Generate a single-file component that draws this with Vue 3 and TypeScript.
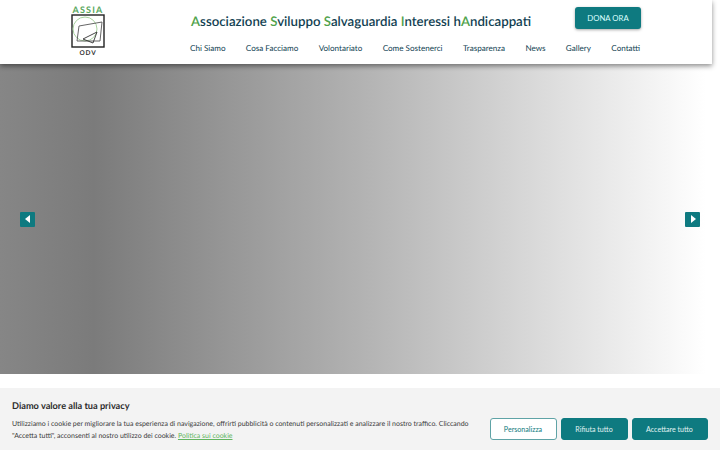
<script setup lang="ts">
const navItems = ['Chi Siamo', 'Cosa Facciamo', 'Volontariato', 'Come Sostenerci', 'Trasparenza', 'News', 'Gallery', 'Contatti']
</script>

<template>
  <div class="page">
    <header class="header">
      <div class="logo">
        <span class="logo-top">ASSIA</span>
        <svg class="logo-mark" width="34" height="34" viewBox="0 0 34 34">
          <rect x="1" y="1" width="32" height="32" fill="#fff" stroke="#222" stroke-width="1.4" />
          <circle cx="14" cy="15" r="12" fill="none" stroke="#a9d3a0" stroke-width="1" />
          <path d="M8 12 L31 8 L29 27 L6 27 Z" fill="none" stroke="#555" stroke-width="0.9" />
          <path d="M12 25 L26 18 L22 29 L17 27 Z" fill="none" stroke="#333" stroke-width="0.9" />
        </svg>
        <span class="logo-bottom">ODV</span>
      </div>
      <div class="main">
        <div class="top-row">
          <h1 class="title"><b>A</b>ssociazione <b>S</b>viluppo <b>S</b>alvaguardia <b>I</b>nteressi h<b>A</b>ndicappati</h1>
          <button class="donate">DONA ORA</button>
        </div>
        <nav class="nav">
          <a v-for="item in navItems" :key="item">{{ item }}</a>
        </nav>
      </div>
    </header>

    <section class="hero">
      <button class="arrow">
        <svg width="6" height="8" viewBox="0 0 6 8"><path d="M5 0 L5 8 L0 4 Z" fill="#fff" /></svg>
      </button>
      <button class="arrow">
        <svg width="6" height="8" viewBox="0 0 6 8"><path d="M1 0 L1 8 L6 4 Z" fill="#fff" /></svg>
      </button>
    </section>

    <section class="cookie">
      <div class="cookie-text">
        <h2>Diamo valore alla tua privacy</h2>
        <p>Utilizziamo i cookie per migliorare la tua esperienza di navigazione, offrirti pubblicità o contenuti personalizzati e analizzare il nostro traffico. Cliccando "Accetta tutti", acconsenti al nostro utilizzo dei cookie. <a>Politica sui cookie</a></p>
      </div>
      <div class="cookie-buttons">
        <button class="btn outline">Personalizza</button>
        <button class="btn">Rifiuta tutto</button>
        <button class="btn wide">Accettare tutto</button>
      </div>
    </section>
  </div>
</template>

<style>
html, body {
  margin: 0;
  background: #fff;
  overflow: hidden;
}
</style>

<style scoped>
.page {
  position: relative;
  width: 720px;
  height: 450px;
  overflow: hidden;
  font-family: Lato, "Open Sans", sans-serif;
  text-rendering: geometricPrecision;
}

.header {
  position: relative;
  z-index: 2;
  display: flex;
  width: 712px;
  height: 64px;
  background: #fff;
  box-shadow: 0 2px 5px rgba(0, 0, 0, 0.45);
}

.logo {
  display: flex;
  flex-direction: column;
  align-items: center;
  width: 34px;
  margin: 5px 0 0 71px;
}

.logo-top {
  font-size: 9px;
  font-weight: 700;
  line-height: 9px;
  letter-spacing: 1.2px;
  color: #5aa860;
}

.logo-bottom {
  margin-top: 2px;
  font-size: 6.5px;
  font-weight: 700;
  line-height: 7px;
  letter-spacing: 0.8px;
  color: #333;
}

.main {
  margin-left: 85px;
  flex: 1;
}

.top-row {
  display: flex;
  align-items: flex-start;
}

.title {
  margin: 11px 0 0 1px;
  width: 384px;
  font-size: 13.25px;
  font-weight: 600;
  line-height: 20px;
  color: #123f52;
  white-space: nowrap;
}

.title b {
  font-weight: 600;
  color: #4fa24a;
}

.donate {
  margin-top: 7px;
  width: 66px;
  height: 22px;
  padding: 0;
  border: none;
  border-radius: 3px;
  background: #0e7a80;
  box-shadow: 0 1px 3px rgba(0, 0, 0, 0.35);
  color: #dff;
  font: 400 7.8px Lato, sans-serif;
}

.nav {
  display: flex;
  gap: 20.35px;
  margin-top: 11px;
  font-size: 8.1px;
  line-height: 12px;
  color: #123f52;
}

.hero {
  display: flex;
  align-items: center;
  justify-content: space-between;
  height: 310px;
  padding: 0 20px;
  box-sizing: border-box;
  background: linear-gradient(90deg, #868686 0%, #7b7b7b 13%, #858585 20%, #b2b2b2 50%, #dcdcdc 76%, #fff 98%);
}

.arrow {
  display: flex;
  align-items: center;
  justify-content: center;
  width: 15px;
  height: 15px;
  padding: 0;
  border: none;
  border-radius: 1px;
  background: #0e7a80;
}

.cookie {
  display: flex;
  justify-content: space-between;
  height: 62px;
  margin-top: 14px;
  padding: 11px 12.5px 0 12px;
  box-sizing: border-box;
  background: #f3f3f3;
}

.cookie-text {
  width: 462px;
}

.cookie-text h2 {
  margin: 0 0 6px;
  font-size: 9.2px;
  font-weight: 700;
  line-height: 13px;
  color: #2b2b2b;
}

.cookie-text p {
  margin: 0;
  font-size: 6.98px;
  line-height: 12.3px;
  color: #3a3a3a;
}

.cookie-text a {
  color: #62b560;
  text-decoration: underline;
}

.cookie-buttons {
  display: flex;
  gap: 4px;
  margin-top: 19px;
}

.btn {
  width: 67px;
  height: 22px;
  padding: 0;
  border: 1px solid #0e7a80;
  border-radius: 3px;
  background: #0e7a80;
  color: #e4f4f4;
  font: 400 7.1px Lato, sans-serif;
}

.btn.wide {
  width: 76px;
}

.btn.outline {
  background: #fff;
  color: #0e7a80;
  border: 1.5px solid #5fa3a6;
}
</style>
